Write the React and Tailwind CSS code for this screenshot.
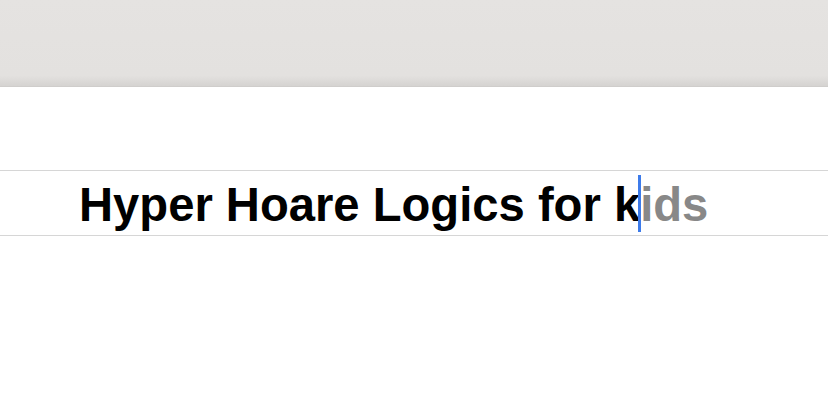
export default function App() {
  return (
    <div className="w-[828px] h-[408px] bg-white overflow-hidden" style={{ fontFamily: '"Liberation Sans", Arial, sans-serif' }}>
      <div className="h-[87px] bg-gradient-to-b from-[#e5e3e1] via-[#e3e1df] via-[88%] to-[#d5d3d1] border-b border-[#cfcdcb]" />
      <div className="h-[83px]" />
      <div className="h-[66px] border-y border-[#d6d6d6] flex items-center pl-[79px]">
        <div className="flex items-center text-[47.2px] font-bold leading-none pt-[3px]">
          <span className="text-black">Hyper Hoare Logics for k</span>
          <span className="w-[3px] h-[57px] bg-[#3d7bea] -ml-[2px] -mr-[1px] -mt-[3px] relative z-10 shrink-0" />
          <span className="text-[#888888]">ids</span>
        </div>
      </div>
    </div>
  );
}
